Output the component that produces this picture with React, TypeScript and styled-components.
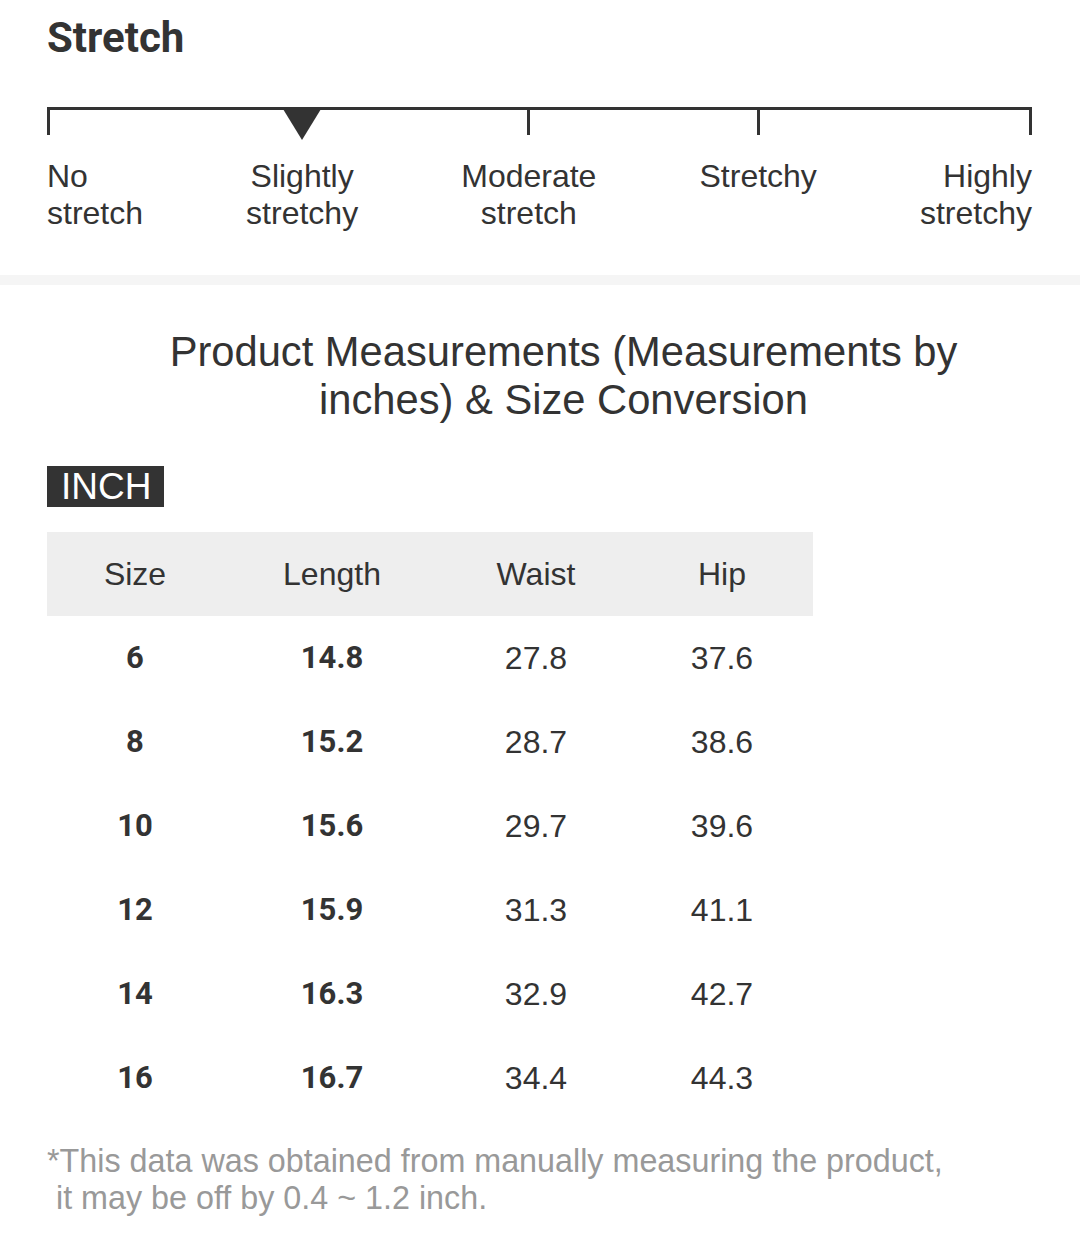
import React from "react";
import styled, { createGlobalStyle } from "styled-components";

const Global = createGlobalStyle`
  html, body { margin: 0; padding: 0; background: #ffffff; }
  body { font-family: "Liberation Sans", Arial, sans-serif; color: #333333; }
`;

const Page = styled.div`
  width: 1080px;
  min-height: 1243px;
  background: #fff;
`;

const StretchSection = styled.section`
  padding: 13px 48px 43px 47px;
`;

const Heading = styled.h2`
  margin: 0;
  font-family: Roboto, "Liberation Sans", sans-serif;
  font-weight: 700;
  font-size: 42px;
  line-height: 50px;
  color: #333;
`;

const Scale = styled.div`
  margin-top: 44px;
  border-top: 3px solid #333;
  display: flex;
  justify-content: space-between;
`;

type Align = "start" | "center" | "end";

const ScaleItem = styled.div<{ $align: Align }>`
  display: flex;
  flex-direction: column;
  align-items: ${(p) =>
    p.$align === "start" ? "flex-start" : p.$align === "end" ? "flex-end" : "center"};
`;

const MarkerSlot = styled.div`
  height: 30px;
  display: flex;
  align-items: flex-start;
`;

const Tick = styled.div`
  width: 3px;
  height: 25px;
  background: #333;
`;

const Pointer = styled.div`
  width: 0;
  height: 0;
  margin-top: -1px;
  border-left: 19px solid transparent;
  border-right: 19px solid transparent;
  border-top: 31px solid #333;
`;

const ScaleLabel = styled.div<{ $align: Align }>`
  margin-top: 18px;
  font-size: 32px;
  line-height: 37px;
  color: #333;
  text-align: ${(p) => (p.$align === "start" ? "left" : p.$align === "end" ? "right" : "center")};
`;

const Band = styled.div`
  height: 10px;
  background: #f5f5f5;
`;

const MeasureSection = styled.section`
  padding: 43px 0 0 47px;
`;

const Title = styled.h3`
  margin: 0;
  padding: 0 60px;
  font-weight: 400;
  font-size: 41.7px;
  line-height: 48px;
  text-align: center;
  color: #333;
`;

const Badge = styled.div`
  display: inline-block;
  margin-top: 42px;
  padding: 0 13px 0 14px;
  height: 41px;
  background: #333;
  color: #fff;
  font-size: 37px;
  line-height: 42px;
`;

const Table = styled.table`
  margin-top: 25px;
  border-collapse: collapse;
  table-layout: fixed;
  width: 766px;
`;

const HeadCell = styled.th<{ $w: number }>`
  width: ${(p) => p.$w}px;
  height: 84px;
  padding: 0;
  background: #eeeeee;
  font-weight: 400;
  font-size: 32px;
  color: #333;
  text-align: center;
`;

const Cell = styled.td<{ $bold?: boolean }>`
  height: 84px;
  padding: 0;
  text-align: center;
  color: #333;
  font-family: ${(p) => (p.$bold ? 'Roboto, "Liberation Sans", sans-serif' : '"Liberation Sans", Arial, sans-serif')};
  font-weight: ${(p) => (p.$bold ? 700 : 400)};
  font-size: ${(p) => (p.$bold ? "31px" : "32px")};
  line-height: ${(p) => (p.$bold ? "40px" : "normal")};
`;

const Note = styled.p`
  margin: 23px 0 0 0;
  font-size: 32.3px;
  line-height: 37px;
  color: #999;
  white-space: pre;
`;

const labels: { text: React.ReactNode; align: Align; marker: "tick" | "pointer" | "none" }[] = [
  { text: <>No<br />stretch</>, align: "start", marker: "tick" },
  { text: <>Slightly<br />stretchy</>, align: "center", marker: "pointer" },
  { text: <>Moderate<br />stretch</>, align: "center", marker: "tick" },
  { text: <>Stretchy</>, align: "center", marker: "tick" },
  { text: <>Highly<br />stretchy</>, align: "end", marker: "tick" },
];

const cols = [
  { name: "Size", w: 176 },
  { name: "Length", w: 218 },
  { name: "Waist", w: 190 },
  { name: "Hip", w: 182 },
];

const rows = [
  ["6", "14.8", "27.8", "37.6"],
  ["8", "15.2", "28.7", "38.6"],
  ["10", "15.6", "29.7", "39.6"],
  ["12", "15.9", "31.3", "41.1"],
  ["14", "16.3", "32.9", "42.7"],
  ["16", "16.7", "34.4", "44.3"],
];

export default function App() {
  return (
    <Page>
      <Global />
      <StretchSection>
        <Heading>Stretch</Heading>
        <Scale>
          {labels.map((l, i) => (
            <ScaleItem key={i} $align={l.align}>
              <MarkerSlot>
                {l.marker === "tick" && <Tick />}
                {l.marker === "pointer" && <Pointer />}
              </MarkerSlot>
              <ScaleLabel $align={l.align}>{l.text}</ScaleLabel>
            </ScaleItem>
          ))}
        </Scale>
      </StretchSection>
      <Band />
      <MeasureSection>
        <Title>Product Measurements (Measurements by inches) &amp; Size Conversion</Title>
        <Badge>INCH</Badge>
        <Table>
          <thead>
            <tr>
              {cols.map((c) => (
                <HeadCell key={c.name} $w={c.w}>{c.name}</HeadCell>
              ))}
            </tr>
          </thead>
          <tbody>
            {rows.map((r) => (
              <tr key={r[0]}>
                <Cell $bold>{r[0]}</Cell>
                <Cell $bold>{r[1]}</Cell>
                <Cell>{r[2]}</Cell>
                <Cell>{r[3]}</Cell>
              </tr>
            ))}
          </tbody>
        </Table>
        <Note>{"*This data was obtained from manually measuring the product,\n it may be off by 0.4 ~ 1.2 inch."}</Note>
      </MeasureSection>
    </Page>
  );
}
